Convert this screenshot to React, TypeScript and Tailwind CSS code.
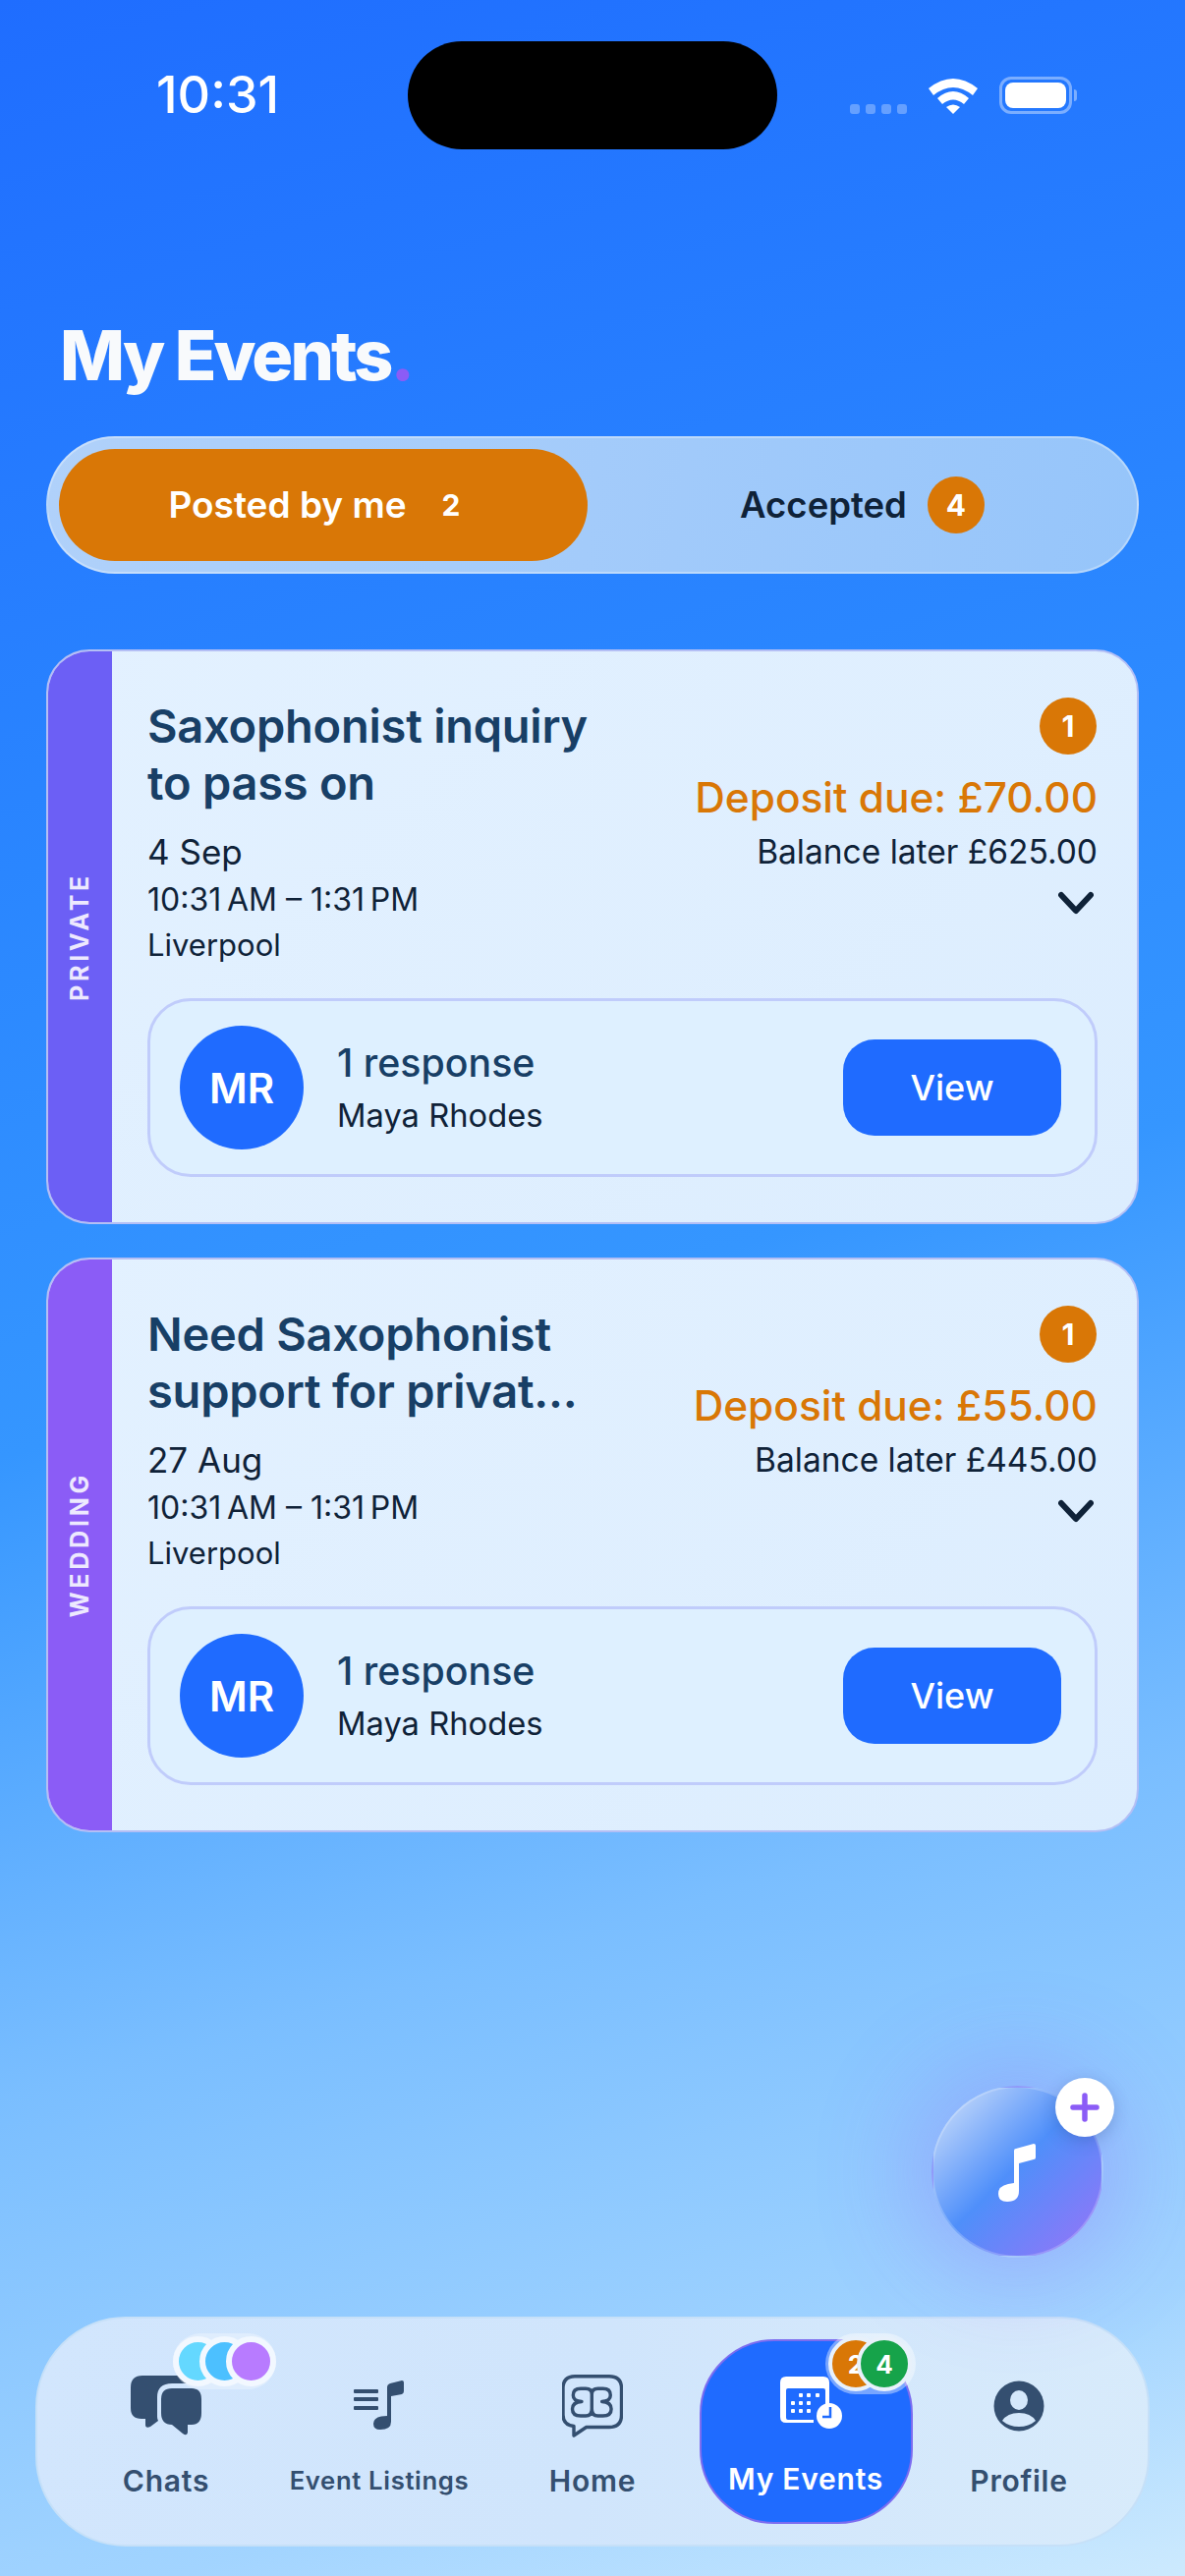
import React from 'react';

const font = { fontFamily: 'Inter, "Noto Sans", sans-serif' };

interface EventCardProps {
  kind: string;
  stripe: string;
  title: string[];
  date: string;
  deposit: string;
  balance: string;
}

const ChatsIcon = () => (
  <svg className="ml-[3px]" width="76" height="62" viewBox="0 0 76 62" fill="#344f70">
    <path d="M12 0H52Q62 0 64 8H42Q27 8 27 22V42Q27 44 28 46L20 52Q15 54 15 50V44H11Q0 44 0 33V12Q0 0 12 0Z" />
    <path d="M42 13H62Q72 13 72 24V38Q72 50 62 50H58V58Q57 62 53 59L42 50H42Q31 50 31 38V24Q31 13 42 13Z" />
  </svg>
);

const ListingsIcon = () => (
  <svg width="52" height="52" viewBox="0 0 52 52" fill="#344f70">
    <rect x="0" y="9" width="25" height="4" rx="1" />
    <rect x="0" y="17" width="25" height="4" rx="1" />
    <rect x="0" y="26" width="25" height="4" rx="1" />
    <path d="M34 7Q34 4 37 3L49 0Q51 0 51 2V11Q51 13 49 14L38 16V42Q38 50 27 50Q20 50 20 44Q20 38 28 36.500L34 36Z" />
  </svg>
);

const HomeIcon = () => (
  <svg width="62" height="64" viewBox="0 0 62 64" fill="none" stroke="#344f70" strokeWidth="3.400" strokeLinecap="round" strokeLinejoin="round">
    <path d="M13 1.700H48Q60.500 1.700 60.500 14V41Q60.500 53.500 48 53.500H24.700L12 62V52.500Q1 51 1 41V14Q1 1.700 13 1.700Z" />
    <path d="M30.300 23V20Q30.300 14.300 24 14.300H19Q11.300 14.300 11.300 21Q11.300 27 20 27.500Q10.500 28 10.500 35Q10.500 42 19 42H24Q30.300 42 30.300 35V20Q30.300 14.300 36.600 14.300H41.600Q49.300 14.300 49.300 21Q49.300 27 40.600 27.500Q50.100 28 50.100 35Q50.100 42 41.600 42H36.600Q30.300 42 30.300 35" />
  </svg>
);

const CalendarIcon = () => (
  <svg width="64" height="54" viewBox="0 0 64 54" fill="#ffffff">
    <path d="M6 0H44Q50 0 50 6V30H46V14Q46 12 44 12H8Q6 12 6 14V42Q6 44 8 44H34V47H6Q0 47 0 41V6Q0 0 6 0Z" />
    <rect x="19" y="17" width="4" height="4" rx="1" />
    <rect x="27" y="17" width="4" height="4" rx="1" />
    <rect x="36" y="17" width="4" height="4" rx="1" />
    <rect x="11" y="25" width="4" height="4" rx="1" />
    <rect x="19" y="25" width="4" height="4" rx="1" />
    <rect x="27" y="25" width="4" height="4" rx="1" />
    <rect x="11" y="33" width="4" height="4" rx="1" />
    <rect x="19" y="33" width="4" height="4" rx="1" />
    <rect x="27" y="33" width="4" height="4" rx="1" />
    <circle cx="50" cy="40" r="13" />
    <path d="M51 31V41H43" fill="none" stroke="#1f6bff" strokeWidth="2.500" />
  </svg>
);

const ProfileIcon = () => (
  <svg width="52" height="52" viewBox="0 0 52 52">
    <circle cx="26" cy="26" r="25.500" fill="#344f70" />
    <ellipse cx="26" cy="20" rx="9" ry="10" fill="#d5e8fb" />
    <path d="M9 41Q14 33 26 33Q38 33 43 41Q36 47 26 47Q16 47 9 41Z" fill="#d5e8fb" />
  </svg>
);

const EventCard = ({ kind, stripe, title, date, deposit, balance }: EventCardProps) => (
  <div className="flex h-[585px] overflow-hidden rounded-[44px] border-2 border-[#b4bff5] bg-[linear-gradient(135deg,#e3f1ff,#dcedfe)]">
    <div className={`flex w-[65px] shrink-0 items-center justify-center ${stripe}`}>
      <span className="rotate-180 text-[25px] font-bold tracking-[0.15em] text-[#ede9fe] [writing-mode:vertical-rl]">{kind}</span>
    </div>
    <div className="flex flex-1 flex-col pt-[47px] pr-[40px] pl-[36px]">
      <div className="flex justify-between">
        <div className="flex flex-col">
          {title.map((line) => (
            <p key={line} className="text-[47px] leading-[58px] font-semibold tracking-[-0.005em] text-[#183f66]">{line}</p>
          ))}
          <p className="mt-[19px] text-[35px] leading-[44px] text-[#0f2238]">{date}</p>
          <p className="mt-[7px] text-[32px] leading-[40px] text-[#0f2238]">10:31{'\u2009'}AM – 1:31{'\u2009'}PM</p>
          <p className="mt-[6px] text-[31px] leading-[40px] text-[#0f2238]">Liverpool</p>
        </div>
        <div className="flex flex-col items-end">
          <span className="mr-[1px] flex h-[58px] w-[58px] items-center justify-center rounded-full bg-[#d97706] text-[30px] font-bold text-white">1</span>
          <p className="mt-[19px] text-[42.400px] leading-[50px] font-medium text-[#d97706]">{deposit}</p>
          <p className="mt-[8px] text-[33.500px] leading-[44px] text-[#0f2238]">{balance}</p>
          <svg className="mt-[18px] mr-[4px]" width="36" height="24" viewBox="0 0 36 24" fill="none" stroke="#0f2238" strokeWidth="6" strokeLinecap="round" strokeLinejoin="round">
            <path d="M3 4L18 20L33 4" />
          </svg>
        </div>
      </div>
      <div className="mt-[34px] flex h-[182px] items-center justify-between rounded-[44px] border-[3px] border-[#c0ccfb] bg-[#def0ff] pr-[34px] pl-[30px]">
        <div className="flex items-center gap-[34px]">
          <span className="flex h-[126px] w-[126px] items-center justify-center rounded-full bg-[#1f6bff] text-[42px] font-semibold text-white">MR</span>
          <div className="flex flex-col">
            <p className="text-[39.300px] leading-[50px] font-medium text-[#183f66]">1 response</p>
            <p className="mt-[6px] text-[32.700px] leading-[44px] text-[#0f2238]">Maya Rhodes</p>
          </div>
        </div>
        <button className="h-[98px] w-[222px] rounded-[32px] bg-[#1f6bff] text-[36px] font-medium text-white">View</button>
      </div>
    </div>
  </div>
);

const NavItem = ({ label, small, children }: { label: string; small?: boolean; children: React.ReactNode }) => (
  <div className="relative flex w-[217px] flex-col items-center">
    <div className="flex h-[80px] items-center justify-center">{children}</div>
    <span className={`mt-[16px] leading-[40px] font-semibold tracking-[0.025em] text-[#344f70] ${small ? 'text-[25.700px]' : 'text-[30px]'}`}>{label}</span>
  </div>
);

export default function App() {
  return (
    <div style={font} className="relative flex h-[2622px] w-[1206px] flex-col overflow-hidden bg-[linear-gradient(164deg,#1f6dff_0%,#2a86ff_30%,#3596ff_50%,#7abeff_72%,#a2d4ff_90%,#cdeafe_100%)] px-[47px]">
      {/* status bar */}
      <div className="flex h-[152px] items-center pt-[42px]">
        <span className="ml-[112px] w-[256px] text-[52px] leading-[68px] font-medium text-white">10:31</span>
        <div className="h-[110px] w-[376px] rounded-[55px] bg-black"></div>
        <div className="ml-[74px] flex h-[38px] items-end">
          <div className="flex gap-[6px]">
            <span className="h-[10px] w-[10px] rounded-[3px] bg-white/30"></span>
            <span className="h-[10px] w-[10px] rounded-[3px] bg-white/30"></span>
            <span className="h-[10px] w-[10px] rounded-[3px] bg-white/30"></span>
            <span className="h-[10px] w-[10px] rounded-[3px] bg-white/30"></span>
          </div>
          <svg className="ml-[22px]" width="50" height="38" viewBox="0 0 50 38" fill="#ffffff">
            <path d="M0 12Q25 -8 50 12L45 19Q25 3 5 19Z" />
            <path d="M9 22Q25 8 41 22L36 28Q25 19 14 28Z" />
            <path d="M18 31Q25 26 32 31L25 38Z" />
          </svg>
          <div className="ml-[22px] flex items-center gap-[2px]">
            <div className="h-[38px] w-[74px] rounded-[12px] border-[3px] border-white/40 p-[3px]">
              <div className="h-full w-full rounded-[8px] bg-white"></div>
            </div>
            <div className="h-[12px] w-[3px] rounded-r-full bg-white/40"></div>
          </div>
        </div>
      </div>

      <h1 className="mt-[167px] ml-[14px] text-[70px] leading-[85px] font-extrabold tracking-[-0.042em] text-[#f8fafc]">
        My Events<span className="text-[#8b5cf6]">.</span>
      </h1>

      {/* tabs */}
      <div className="mt-[40px] flex h-[140px] items-center rounded-[70px] border-2 border-white/30 bg-[linear-gradient(100deg,#b0d1fa,#96c5fa)] pl-[11px]">
        <div className="flex h-[114px] w-[538px] items-center justify-center gap-[36px] rounded-[57px] bg-[#d97706] pr-[18px] text-[37px] font-semibold text-white">
          <span>Posted by me</span>
          <span className="text-[30px] font-bold">2</span>
        </div>
        <div className="flex flex-1 items-center justify-center gap-[21px] text-[36.500px] font-semibold text-[#0f2238]">
          <span>Accepted</span>
          <span className="flex h-[58px] w-[58px] items-center justify-center rounded-full bg-[#d97706] text-[30px] font-bold text-white">4</span>
        </div>
      </div>

      {/* cards */}
      <div className="mt-[77px] flex flex-col gap-[34px]">
        <EventCard kind="PRIVATE" stripe="bg-[#6c5ff5]" title={['Saxophonist inquiry', 'to pass on']} date="4 Sep" deposit="Deposit due: £70.00" balance="Balance later £625.00" />
        <EventCard kind="WEDDING" stripe="bg-[#8b5cf6]" title={['Need Saxophonist', 'support for privat...']} date="27 Aug" deposit="Deposit due: £55.00" balance="Balance later £445.00" />
      </div>

      {/* bottom nav */}
      <div className="mt-auto mb-[30px] -mx-[11px] flex h-[234px] items-center justify-center rounded-[92px] border-2 border-[#c6e0f8] bg-[linear-gradient(100deg,#d2e6fd,#d0e5fc_50%,#d8ebfb)] px-[12px] pt-[3px]">
        <NavItem label="Chats">
          <ChatsIcon />
          <div className="absolute top-[-34px] left-[115px] flex h-[57px] w-[105px] items-center rounded-full bg-white/30">
            <span className="h-[51px] w-[51px] shrink-0 rounded-full border-[6px] border-[#f2f8ff] bg-[#64d8ff]"></span>
            <span className="-ml-[24px] h-[51px] w-[51px] shrink-0 rounded-full border-[6px] border-[#f2f8ff] bg-[#4cc0ff]"></span>
            <span className="-ml-[24px] h-[51px] w-[51px] shrink-0 rounded-full border-[6px] border-[#f2f8ff] bg-[#b87bff]"></span>
          </div>
        </NavItem>
        <NavItem label="Event Listings" small>
          <ListingsIcon />
        </NavItem>
        <NavItem label="Home">
          <HomeIcon />
        </NavItem>
        <div className="relative -mt-[3px] flex h-[188px] w-[217px] flex-col items-center rounded-[76px] border-2 border-[#7c6cf0] bg-[#1f6bff] pt-[28px]">
          <div className="flex h-[70px] items-center justify-center pl-[12px]">
            <CalendarIcon />
          </div>
          <span className="mt-[22px] text-[30px] leading-[40px] font-semibold tracking-[0.025em] text-white">My Events</span>
          <div className="absolute top-[-8px] left-[126px] flex h-[62px] w-[92px] items-center justify-center rounded-full bg-white/40">
            <span className="flex h-[56px] w-[56px] shrink-0 items-center justify-center rounded-full border-4 border-[#e8f1fb] bg-[#d97706] text-[26px] font-bold text-white">2</span>
            <span className="-ml-[27px] flex h-[56px] w-[56px] shrink-0 items-center justify-center rounded-full border-4 border-[#e8f1fb] bg-[#16a34a] text-[26px] font-bold text-white">4</span>
          </div>
        </div>
        <NavItem label="Profile">
          <ProfileIcon />
        </NavItem>
      </div>

      {/* floating add button */}
      <div className="absolute top-[2123px] left-[948px] flex h-[175px] w-[175px] items-center justify-center rounded-full border-2 border-white/20 bg-[linear-gradient(135deg,#c8dcfa_5%,#4f8ffa_48%,#8b78f8_90%)] shadow-[0_0_100px_20px_rgba(139,92,246,0.3)]">
        <svg width="40" height="60" viewBox="0 0 40 60" fill="#ffffff">
          <path d="M16 8Q16 6 18 6L36 1Q38 1 38 3V15Q38 17 36 17L21 21V49Q21 60 9 60Q0 60 0 52Q0 44 10 42L16 41Z" />
        </svg>
        <div className="absolute top-[-10px] left-[124px] flex h-[60px] w-[60px] items-center justify-center rounded-full bg-white shadow-[0_4px_16px_rgba(30,60,120,0.25)]">
          <svg width="30" height="30" viewBox="0 0 30 30" fill="none" stroke="#8b5cf6" strokeWidth="5.500" strokeLinecap="round">
            <path d="M15 3V27M3 15H27" />
          </svg>
        </div>
      </div>
    </div>
  );
}
